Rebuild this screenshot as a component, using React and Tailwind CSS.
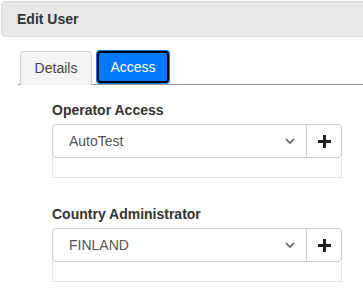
import React from "react";

const Chevron = () => (
  <svg width="10" height="6" viewBox="0 0 10 6" className="shrink-0">
    <polyline points="1,1 5,5 9,1" fill="none" stroke="#555" strokeWidth="1.6" />
  </svg>
);

const Plus = () => (
  <svg width="13" height="13" viewBox="0 0 13 13">
    <rect x="5" y="0" width="3" height="13" fill="#222" />
    <rect x="0" y="5" width="13" height="3" fill="#222" />
  </svg>
);

const SelectGroup = ({ label, value }) => (
  <div className="flex flex-col">
    <label className="text-[14px] leading-[20px] font-bold text-[#333] mb-1">{label}</label>
    <div className="flex h-[34px] w-[290px]">
      <div className="flex flex-1 items-center justify-between border border-[#ccc] rounded-l-[4px] pl-[16px] pr-[11px] bg-white">
        <span className="text-[14px] text-[#555]">{value}</span>
        <Chevron />
      </div>
      <button className="w-[36px] -ml-px flex items-center justify-center border border-[#ccc] rounded-r-[4px] bg-white">
        <Plus />
      </button>
    </div>
    <div className="h-[20px] w-[290px] border border-[#e6e6e6] border-t-0"></div>
  </div>
);

export default function App() {
  return (
    <div className="w-[363px] h-[289px] overflow-hidden bg-white font-['Liberation_Sans',Arial,sans-serif] pt-px pl-px">
      <div className="w-[380px] h-[36px] flex items-center pl-[15px] bg-[#e8e8e8] border border-[#dcdcdc] rounded-l-[4px]">
        <span className="text-[14px] font-bold text-[#333]">Edit User</span>
      </div>

      <div className="ml-[17px] mt-[13px] flex items-end gap-[4px] pl-[2px] border-b border-[#999] w-[360px] h-[35px]">
        <div className="w-[72px] h-[34px] -mb-px flex items-center justify-center bg-[#f4f4f4] border border-[#ccc] border-b-0 rounded-t-[4px] text-[14px] text-[#444]">
          Details
        </div>
        <div className="w-[74px] h-[34px] p-px bg-[#007bff] rounded-[4px]">
          <div className="w-full h-full flex items-center justify-center border-2 border-black rounded-[4px] bg-[#007bff] text-[14px] text-white">
            Access
          </div>
        </div>
      </div>

      <div className="ml-[51px] mt-[15px] flex flex-col gap-[26px]">
        <SelectGroup label="Operator Access" value="AutoTest" />
        <SelectGroup label="Country Administrator" value="FINLAND" />
      </div>
    </div>
  );
}
